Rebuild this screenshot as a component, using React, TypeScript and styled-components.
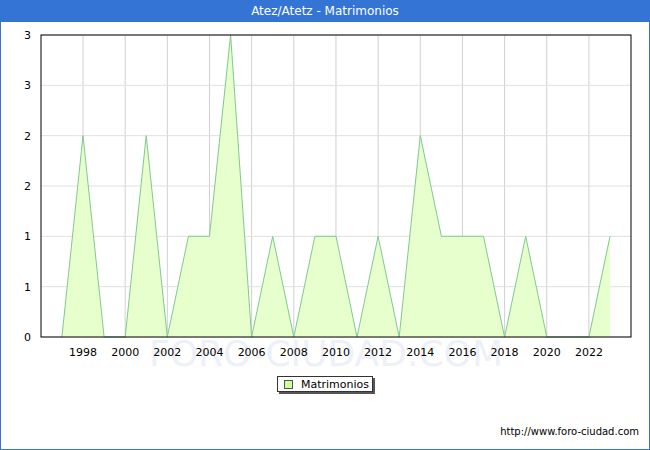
import * as React from "react";
import styled, { createGlobalStyle } from "styled-components";

const GlobalStyle = createGlobalStyle`
  body { margin: 0; font-family: "DejaVu Sans", sans-serif; }
`;

const Frame = styled.div`
  box-sizing: border-box;
  width: 650px;
  height: 450px;
  border: 1px solid #3474d5;
  border-top: none;
  display: flex;
  flex-direction: column;
  background: #fff;
`;

const TitleBar = styled.div`
  height: 23px;
  background: #3474d5;
  color: #fff;
  font-size: 12px;
  display: flex;
  align-items: center;
  justify-content: center;
`;

const ChartArea = styled.div`
  position: relative;
  flex: 1;
`;

const Legend = styled.div`
  position: absolute;
  left: 276px;
  top: 354px;
  width: 96px;
  height: 16px;
  border: 1px solid #333;
  box-shadow: 2px 2px 0 #555;
  background: #fff;
  font-size: 11px;
  display: flex;
  align-items: center;
  gap: 8px;
  padding-left: 6px;
  box-sizing: border-box;
`;

const Swatch = styled.span`
  width: 7px;
  height: 7px;
  border: 1px solid #555;
  background: #ccff99;
`;

const Url = styled.div`
  position: absolute;
  right: 10px;
  top: 404px;
  font-size: 10px;
  color: #000;
`;

const data = [0, 2, 0, 0, 2, 0, 1, 1, 3, 0, 1, 0, 1, 1, 0, 1, 0, 2, 1, 1, 1, 0, 1, 0, 0, 0, 1];
const x0 = 40, x1 = 630, yTop = 13, yBot = 315;
const xOf = (year: number) => 82 + (year - 1998) * 21.08;
const yOf = (v: number) => yBot - (v / 3) * (yBot - yTop);

export default function App() {
  const pts = data.map((v, i) => `${xOf(1997 + i).toFixed(1)},${yOf(v).toFixed(1)}`);
  const area = `${xOf(1997)},${yBot} ${pts.join(" ")} ${xOf(2023)},${yBot}`;
  const yLabels = ["0", "1", "1", "2", "2", "3", "3"];
  const years = [];
  for (let y = 1998; y <= 2022; y += 2) years.push(y);
  return (
    <>
      <GlobalStyle />
      <Frame>
        <TitleBar>Atez/Atetz - Matrimonios</TitleBar>
        <ChartArea>
          <svg width="648" height="427" style={{ display: "block" }}>
            <text x="325" y="344" textAnchor="middle" fontSize="36" fill="#eef0f8" fontFamily="DejaVu Sans">FORO-CIUDAD.COM</text>
            {years.map((y) => (
              <line key={y} x1={xOf(y)} x2={xOf(y)} y1={yTop} y2={yBot} stroke="#d0d0d0" />
            ))}
            {yLabels.map((_, i) => (
              <line key={i} x1={x0} x2={x1} y1={yBot - i * (yBot - yTop) / 6} y2={yBot - i * (yBot - yTop) / 6} stroke="#e0e0e0" />
            ))}
            <polygon points={area} fill="#e6ffcc" stroke="none" />
            <polyline points={pts.join(" ")} fill="none" stroke="#80c890" strokeWidth="1" />
            <rect x={x0} y={yTop} width={x1 - x0} height={yBot - yTop} fill="none" stroke="#000" />
            {yLabels.map((l, i) => (
              <text key={i} x="30" y={yBot - i * (yBot - yTop) / 6 + 4} textAnchor="end" fontSize="11" fill="#000" fontFamily="DejaVu Sans">{l}</text>
            ))}
            {years.map((y) => (
              <text key={y} x={xOf(y)} y={yBot + 19} textAnchor="middle" fontSize="11" fill="#000" fontFamily="DejaVu Sans">{y}</text>
            ))}
          </svg>
          <Legend><Swatch />Matrimonios</Legend>
          <Url>http://www.foro-ciudad.com</Url>
        </ChartArea>
      </Frame>
    </>
  );
}
